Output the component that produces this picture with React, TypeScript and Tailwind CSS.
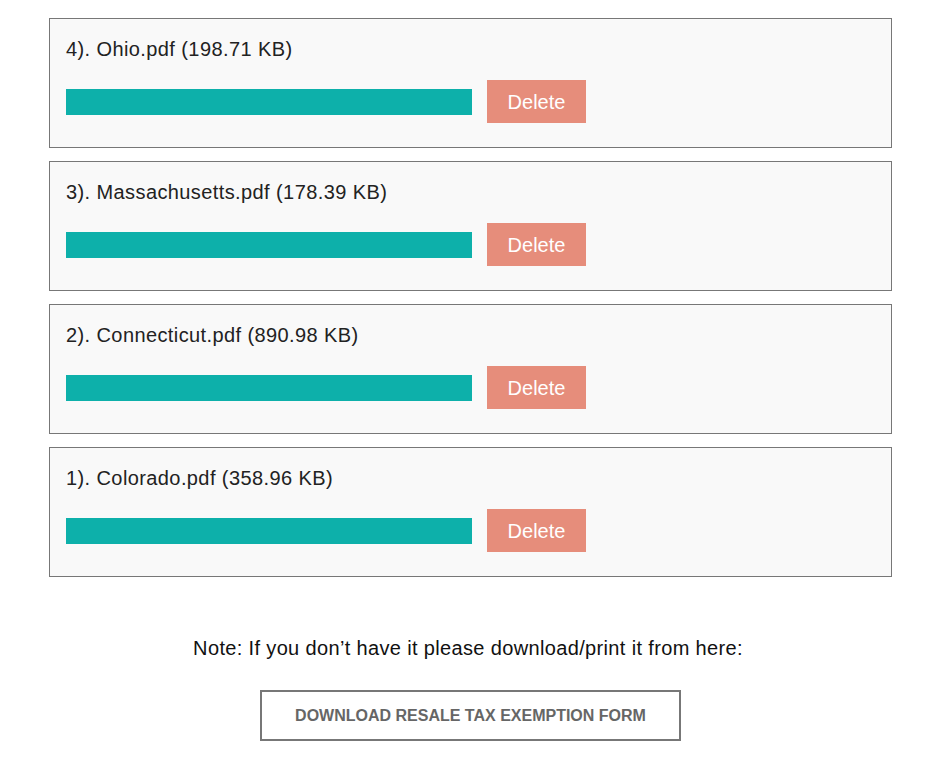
const files = [
  { n: 4, name: 'Ohio.pdf', size: '198.71 KB' },
  { n: 3, name: 'Massachusetts.pdf', size: '178.39 KB' },
  { n: 2, name: 'Connecticut.pdf', size: '890.98 KB' },
  { n: 1, name: 'Colorado.pdf', size: '358.96 KB' },
]

export default function App() {
  return (
    <div
      className="min-h-screen bg-white pt-[18px]"
      style={{ fontFamily: '"Liberation Sans", Arial, sans-serif' }}
    >
      <div className="ml-[49px] w-[843px] space-y-[13px]">
        {files.map((f) => (
          <div
            key={f.n}
            className="h-[130px] border-[1.5px] border-[#777] bg-[#f9f9f9] px-4 pt-[18px]"
          >
            <p className="text-[20px] leading-6 tracking-[0.4px] text-[#222]">
              {f.n}). {f.name} ({f.size})
            </p>
            <div className="mt-[19px] flex items-center gap-[15px]">
              <div className="h-[26px] w-[406px] bg-[#0db0aa]" />
              <button className="h-[43px] w-[99px] bg-[#e68d7b] text-[20px] text-white">
                Delete
              </button>
            </div>
          </div>
        ))}
      </div>

      <p className="mt-[59px] text-center text-[20px] leading-6 tracking-[0.35px] text-[#111]">
        Note: If you don’t have it please download/print it from here:
      </p>

      <div className="mt-[30px] flex justify-center">
        <button className="ml-[5px] h-[51px] w-[421px] border-2 border-[#777] bg-white text-[16px] font-bold uppercase text-[#666]">
          Download resale tax exemption form
        </button>
      </div>
    </div>
  )
}
